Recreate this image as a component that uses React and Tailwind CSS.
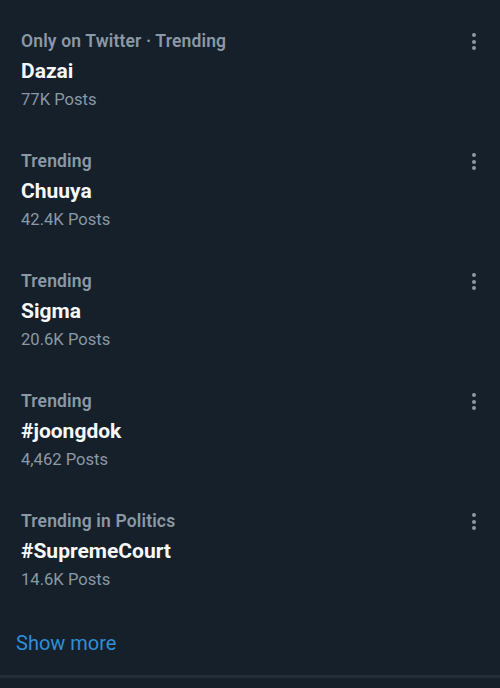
const trends = [
  { cat: "Only on Twitter · Trending", name: "Dazai", posts: "77K Posts" },
  { cat: "Trending", name: "Chuuya", posts: "42.4K Posts" },
  { cat: "Trending", name: "Sigma", posts: "20.6K Posts" },
  { cat: "Trending", name: "#joongdok", posts: "4,462 Posts" },
  { cat: "Trending in Politics", name: "#SupremeCourt", posts: "14.6K Posts" },
];

function Dots() {
  return (
    <div className="flex flex-col items-center gap-[2.5px] pt-[7px]">
      <span className="block w-[4px] h-[4px] rounded-full bg-[#8b98a5]" />
      <span className="block w-[4px] h-[4px] rounded-full bg-[#8b98a5]" />
      <span className="block w-[4px] h-[4px] rounded-full bg-[#8b98a5]" />
    </div>
  );
}

export default function App() {
  return (
    <div
      className="w-[500px] h-[688px] bg-[#15202b] overflow-hidden flex flex-col"
      style={{ fontFamily: "Roboto, 'Noto Sans', sans-serif" }}
    >
      {trends.map((t, i) => (
        <div key={i} className="h-[120px] flex pl-[21px] pr-[24px] pt-[26px]">
          <div className="flex-1 flex flex-col">
            <div className="text-[17.5px] tracking-[0.15px] leading-[30px] font-semibold text-[#8b98a5]">{t.cat}</div>
            <div className="text-[21px] leading-[30px] font-bold text-[#f7f9f9]">{t.name}</div>
            <div className="text-[16.6px] leading-[27px] text-[#8b98a5]">{t.posts}</div>
          </div>
          <Dots />
        </div>
      ))}
      <div className="h-[75px] pl-[16px] pt-[28px]">
        <div className="text-[20px] leading-[30px] text-[#2f8fd6]">Show more</div>
      </div>
      <div className="h-[3px] bg-[#222d38]" />
      <div className="flex-1" />
    </div>
  );
}
